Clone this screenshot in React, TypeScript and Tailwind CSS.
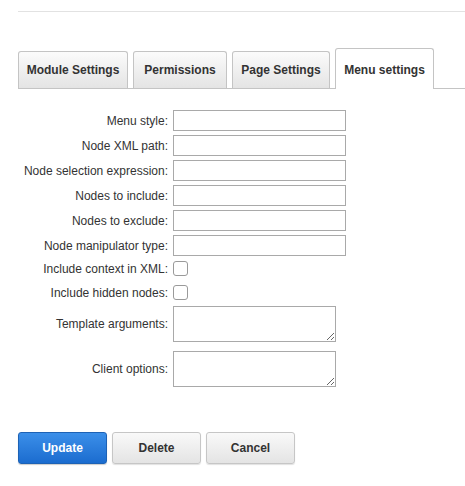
import { useState } from 'react';

const tabs = [
    { name: 'Module Settings', w: 'w-[110px]' },
    { name: 'Permissions', w: 'w-[94px]' },
    { name: 'Page Settings', w: 'w-[98px]' },
    { name: 'Menu settings', w: 'w-[99px]' },
];

const textFields = ['Menu style:', 'Node XML path:', 'Node selection expression:', 'Nodes to include:', 'Nodes to exclude:', 'Node manipulator type:'];

function Label({ children }: { children: string }) {
    return <label className="w-[155px] shrink-0 pr-[5px] text-right text-[12px] leading-[14px] text-[#333]">{children}</label>;
}

export default function App() {
    const [active, setActive] = useState(3);

    return (
        <div className="h-[486px] w-[465px] overflow-hidden bg-white font-['Liberation_Sans',Arial,sans-serif]">
            <div className="ml-[18px] h-[12px] border-b border-[#e2e2e2]" />

            <div className="ml-[18px] mt-[36px] flex items-end gap-[5px] border-b border-[#c4c4c4]">
                {tabs.map((t, i) => (
                    <button
                        key={t.name}
                        onClick={() => setActive(i)}
                        className={i === active
                            ? `${t.w} -mb-px h-[41px] rounded-t-[3px] border border-b-0 border-[#c4c4c4] bg-white pt-[2px] text-[12px] font-bold text-[#333]`
                            : `${t.w} h-[37px] rounded-t-[3px] border border-b-0 border-[#c4c4c4] bg-gradient-to-b from-[#fbfbfb] to-[#e4e4e4] text-[12px] font-bold text-[#333]`}
                    >
                        {t.name}
                    </button>
                ))}
            </div>

            <div className="ml-[18px] mt-[21px] flex flex-col">
                {textFields.map((f, i) => (
                    <div key={f} className={`flex items-center ${i > 0 ? 'mt-[4px]' : ''}`}>
                        <Label>{f}</Label>
                        <input type="text" className="h-[21px] w-[173px] border border-[#a9a9a9] bg-white px-1 text-[12px] outline-none" />
                    </div>
                ))}

                <div className="mt-[5px] flex h-[15px] items-center">
                    <Label>Include context in XML:</Label>
                    <input type="checkbox" className="h-[15px] w-[15px] appearance-none rounded-[3px] border border-[#9a9a9a] bg-white" />
                </div>
                <div className="mt-[9px] flex h-[15px] items-center">
                    <Label>Include hidden nodes:</Label>
                    <input type="checkbox" className="h-[15px] w-[15px] appearance-none rounded-[3px] border border-[#9a9a9a] bg-white" />
                </div>

                <div className="mt-[6px] flex items-center">
                    <Label>Template arguments:</Label>
                    <textarea className="block h-[36px] w-[163px] border border-[#a9a9a9] bg-white text-[12px] outline-none" />
                </div>
                <div className="mt-[9px] flex items-center">
                    <Label>Client options:</Label>
                    <textarea className="block h-[36px] w-[163px] border border-[#a9a9a9] bg-white text-[12px] outline-none" />
                </div>
            </div>

            <div className="ml-[18px] mt-[45px] flex gap-[5px]">
                <button className="h-[32px] w-[89px] rounded-[3px] border border-[#1d62b5] bg-gradient-to-b from-[#3b8fe9] to-[#1b6ccf] text-[12px] font-bold text-white shadow-[0_1px_1px_rgba(0,0,0,0.2)]">Update</button>
                <button className="h-[32px] w-[89px] rounded-[3px] border border-[#c6c6c6] bg-gradient-to-b from-[#f9f9f9] to-[#e4e4e4] text-[12px] font-bold text-[#333] shadow-[0_1px_1px_rgba(0,0,0,0.12)]">Delete</button>
                <button className="h-[32px] w-[89px] rounded-[3px] border border-[#c6c6c6] bg-gradient-to-b from-[#f9f9f9] to-[#e4e4e4] text-[12px] font-bold text-[#333] shadow-[0_1px_1px_rgba(0,0,0,0.12)]">Cancel</button>
            </div>
        </div>
    );
}
